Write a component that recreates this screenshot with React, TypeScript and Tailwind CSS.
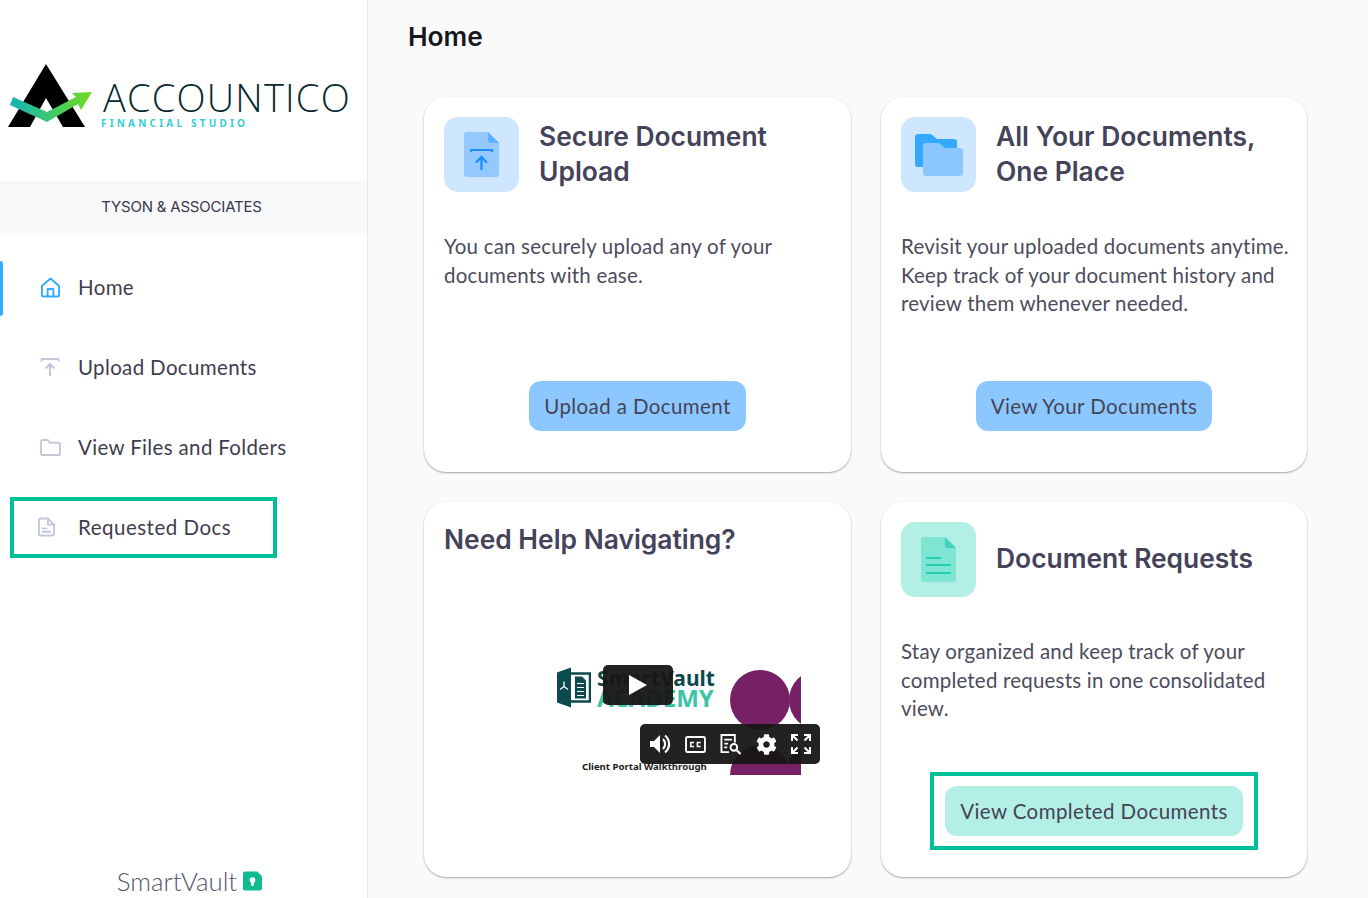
import { FaCog } from "react-icons/fa";
import type { ReactNode } from "react";

const BODY = "font-['Lato','Noto_Sans',sans-serif]";

function NavHome() {
  return (
    <svg viewBox="0 0 22 22" fill="none" stroke="#33aaff" strokeWidth="2" strokeLinejoin="round" className="w-[21px] h-[21px]">
      <path d="M11 1.500 2 9.500V19a1.500 1.500 0 0 0 1.500 1.500h15A1.500 1.500 0 0 0 20 19V9.500z" />
      <path d="M8 20.500V12.500h6v8" />
    </svg>
  );
}

function NavUpload() {
  return (
    <svg viewBox="0 0 20 20" fill="none" stroke="#c3c8d9" strokeWidth="2" strokeLinejoin="round" className="w-[20px] h-[20px]">
      <path d="M1.500 4.500V2h17v2.500" />
      <path d="M10 19V7.500M5.500 11.500 10 7l4.500 4.500" />
    </svg>
  );
}

function NavFolder() {
  return (
    <svg viewBox="0 0 22 18" fill="none" stroke="#c3c8d9" strokeWidth="2" strokeLinejoin="round" className="w-[21px] h-[17px]">
      <path d="M1 3a2 2 0 0 1 2-2h5l2.500 3H19a2 2 0 0 1 2 2v9a2 2 0 0 1-2 2H3a2 2 0 0 1-2-2z" />
    </svg>
  );
}

function NavDoc() {
  return (
    <svg viewBox="0 0 18 20" fill="none" stroke="#c3c8d9" strokeWidth="2" strokeLinejoin="round" strokeLinecap="round" className="w-[17px] h-[20px]">
      <path d="M3 1h7.500L17 7.500V17a2 2 0 0 1-2 2H3a2 2 0 0 1-2-2V3a2 2 0 0 1 2-2z" />
      <path d="M10.500 1v6.500H17M5 11.500h4M5 15h8" />
    </svg>
  );
}

function NavItem({ icon, label, active }: { icon: ReactNode; label: string; active?: boolean }) {
  return (
    <div className="relative h-[80px] flex items-center pl-[40px]">
      {active && <span className="absolute left-0 top-[14px] h-[55px] w-[3px] rounded-r-sm bg-[#33aaff]" />}
      <span className="w-[38px] flex justify-start">{icon}</span>
      <span className={`${BODY} pt-[1px] text-[20.500px] tracking-[0.35px] text-[#3f3d4e]`}>{label}</span>
    </div>
  );
}

function IconTile({ children, tone }: { children: ReactNode; tone: string }) {
  return <div className={`w-[75px] h-[75px] rounded-[14px] flex items-center justify-center shrink-0 ${tone}`}>{children}</div>;
}

function Card({ icon, title, text, action, tone, outlined }: { icon: ReactNode; title: string; text: string[]; action: string; tone: string; outlined?: boolean }) {
  const button = (
    <button className={`${BODY} h-[50px] px-[15px] rounded-[12px] text-[20.500px] tracking-[0.4px] text-[#454457] ${tone}`}>{action}</button>
  );
  return (
    <div className="h-[375px] rounded-[22px] bg-white shadow-[0_1px_2px_rgba(0,0,0,0.35)] flex flex-col p-5">
      <div className="flex items-center gap-5 h-[75px]">
        {icon}
        <h2 className="font-['Inter',sans-serif] font-semibold text-[26.400px] leading-[35px] pb-[2px] text-[#44435a]">{title}</h2>
      </div>
      <div className={`${BODY} mt-[40px] text-[20.500px] tracking-[0.2px] leading-[28.500px] text-[#4d4c5c] whitespace-nowrap`}>
        {text.map((line) => (
          <div key={line}>{line}</div>
        ))}
      </div>
      <div className="mt-auto mb-[21px] flex justify-center">
        {outlined ? <div className="border-4 border-[#00bf9b] px-[11px] py-[10px] -my-[14px]">{button}</div> : button}
      </div>
    </div>
  );
}

function VideoThumb() {
  return (
    <div className="relative w-[265px] h-[110px] ml-[112px] mt-[108px] overflow-hidden">
      {/* purple blobs */}
      <div className="absolute left-[174px] top-[5px] w-[60px] h-[60px] rounded-full bg-[#762166]" />
      <div className="absolute left-[233px] top-[5px] w-[60px] h-[60px] rounded-full bg-[#762166]" />
      <div className="absolute left-[174px] top-[80px] w-[60px] h-[60px] rounded-full bg-[#762166]" />
      <div className="absolute left-[229px] top-[80px] w-[60px] h-[60px] rounded-full bg-[#762166]" />
      <div className="absolute left-[245px] top-0 w-[40px] h-[110px] bg-white" />
      {/* academy logo */}
      <svg viewBox="0 0 35 40" className="absolute left-0 top-[2px] w-[35px] h-[41px]">
        <path d="M1 5 15 0v40L1 35z" fill="#0b4a4e" />
        <path d="M8 14v5l-4 3M8 19l4 3" stroke="#fff" strokeWidth="1.300" fill="none" />
        <path d="M15 6h19v28H15" fill="none" stroke="#0b4a4e" strokeWidth="2.500" />
        <path d="M19 9h7l4 4v18H19z" fill="#0b4a4e" />
        <path d="M21 16h7M21 20h7M21 24h7M21 28h7" stroke="#fff" strokeWidth="1" />
      </svg>
      <div className="absolute left-[41px] top-[3px] font-['Noto_Sans',sans-serif] font-bold text-[21px] leading-[20px] text-[#0b4a4e]">SmartVault</div>
      <div className="absolute left-[41px] top-[24px] font-['Noto_Sans',sans-serif] font-bold text-[24px] leading-[18px] text-[#3bc4a8]">ACADEMY</div>
      <div className="absolute left-[26px] top-[95px] font-['Noto_Sans',sans-serif] font-bold text-[9.600px] leading-[14px] text-[#1b1b1b] whitespace-nowrap">Client Portal Walkthrough</div>
      {/* play button */}
      <div className="absolute left-[47px] top-0 w-[70px] h-[40px] rounded-[5px] bg-[#161616]/95 flex items-center justify-center">
        <svg viewBox="0 0 20 22" className="w-[18px] h-[20px]"><path d="M0 0l20 11L0 22z" fill="#fff" /></svg>
      </div>
      {/* player controls */}
      <div className="absolute left-[84px] top-[59px] w-[180px] h-[40px] rounded-[5px] bg-[#161616]/95 flex items-center justify-between px-[9px]">
        <svg viewBox="0 0 22 22" className="w-[22px] h-[22px]">
          <path d="M1 8h4l6-6v18l-6-6H1z" fill="#fff" />
          <path d="M14 6a7 7 0 0 1 0 10M16 2.500a11 11 0 0 1 0 17" stroke="#fff" strokeWidth="2.200" fill="none" />
        </svg>
        <svg viewBox="0 0 22 18" className="w-[21px] h-[17px]">
          <rect x="1" y="1" width="20" height="16" rx="1.500" fill="none" stroke="#fff" strokeWidth="2" />
          <path d="M9.500 7H6v4h3.500M16.500 7H13v4h3.500" fill="none" stroke="#fff" strokeWidth="1.600" />
        </svg>
        <svg viewBox="0 0 22 22" className="w-[22px] h-[21px]">
          <path d="M9 19H1V1h14v8" fill="none" stroke="#fff" strokeWidth="2" />
          <path d="M4 6h8M4 10h4M4 14h3" stroke="#fff" strokeWidth="1.800" />
          <circle cx="14" cy="14" r="3.500" fill="none" stroke="#fff" strokeWidth="2" />
          <path d="m17 17 4 4" stroke="#fff" strokeWidth="2.200" />
        </svg>
        <FaCog className="w-[21px] h-[21px] text-white" />
        <svg viewBox="0 0 20 20" fill="none" stroke="#fff" strokeWidth="2" className="w-[20px] h-[20px]">
          <path d="M1 7V1h6M13 1h6v6M19 13v6h-6M7 19H1v-6M1.500 1.500l5 5M18.500 1.500l-5 5M18.500 18.500l-5-5M1.500 18.500l5-5" />
        </svg>
      </div>
    </div>
  );
}

export default function App() {
  return (
    <div className="flex h-[898px] w-[1368px] overflow-hidden bg-[#fafafa]">
      <aside className="w-[368px] shrink-0 h-full bg-white border-r border-[#e6e8ee] flex flex-col">
        <div className="h-[181px] pt-[62px] pl-[8px] flex items-start gap-[11px]">
          <svg viewBox="0 0 84 66" className="w-[84px] h-[66px] shrink-0">
            <defs>
              <linearGradient id="swoosh" x1="0" x2="1" y1="0" y2="0">
                <stop offset="0" stopColor="#10b5b8" />
                <stop offset="1" stopColor="#6fdc1e" />
              </linearGradient>
            </defs>
            <path d="M38 2 77 65H55L38 36 22 65H0z" fill="#000" />
            <path d="M5 35 39 50 68 35l-4-4 20-1-11 18-3-6-31 18L2 43z" fill="url(#swoosh)" />
          </svg>
          <div className="pt-[16px]">
            <div className="font-['Open_Sans',sans-serif] font-light text-[38px] leading-[38px] tracking-[1.200px] text-[#07292f]">ACCOUNTICO</div>
            <div className="font-['Noto_Sans',sans-serif] font-bold text-[10px] leading-[12px] tracking-[3.200px] text-[#38cdd6] -ml-[2px] mt-[1px]">FINANCIAL STUDIO</div>
          </div>
        </div>

        <div className="h-[52px] bg-[#f7f8fa] flex items-center justify-center pr-[4px]">
          <span className="font-['Inter',sans-serif] text-[15px] tracking-[-0.2px] text-[#3a3a48]">TYSON &amp; ASSOCIATES</span>
        </div>

        <nav className="mt-[14px]">
          <NavItem active label="Home" icon={<NavHome />} />
          <NavItem label="Upload Documents" icon={<NavUpload />} />
          <NavItem label="View Files and Folders" icon={<NavFolder />} />
          <div className="h-[80px] flex items-center">
            <div className="ml-[10px] w-[267px] h-[61px] border-4 border-[#00bf9b] flex items-center pl-[24px]">
              <span className="w-[40px]"><NavDoc /></span>
              <span className={`${BODY} pt-[1px] text-[20.500px] tracking-[0.5px] text-[#3f3d4e]`}>Requested Docs</span>
            </div>
          </div>
        </nav>

        <div className="mt-auto mb-[2px] flex items-center justify-center gap-[6px] pl-[12px]">
          <span className="font-['Lato',sans-serif] font-light text-[25.800px] leading-[30px] text-[#55566a]">SmartVault</span>
          <svg viewBox="0 0 20 20" className="w-[19px] h-[20px]">
            <path d="M2 0h13l5 5v13a2 2 0 0 1-2 2H2a2 2 0 0 1-2-2V2a2 2 0 0 1 2-2z" fill="#10bb91" />
            <circle cx="10" cy="9" r="3" fill="#fff" />
            <path d="M8.500 10h3v5h-3z" fill="#fff" />
          </svg>
        </div>
      </aside>

      <main className="flex-1 min-w-0">
        <h1 className="pl-[40px] pt-[20px] h-[97px] font-['Inter',sans-serif] font-semibold text-[26.300px] leading-[34px] text-[#17171f]">Home</h1>
        <div className="ml-[56px] w-[883px] grid grid-cols-[427px_426px] gap-[30px]">
          <Card
            title="Secure Document Upload"
            text={["You can securely upload any of your", "documents with ease."]}
            action="Upload a Document"
            tone="bg-[#8cc8ff]"
            icon={
              <IconTile tone="bg-[#cfe6ff]">
                <svg viewBox="0 0 35 45" className="w-[35px] h-[45px]">
                  <path d="M3 0h21l11 11v31a3 3 0 0 1-3 3H3a3 3 0 0 1-3-3V3a3 3 0 0 1 3-3z" fill="#93c9ff" />
                  <path d="M24 0l11 11H27a3 3 0 0 1-3-3z" fill="#5cb0ff" />
                  <path d="M7 20v-2h21v2" stroke="#1a8cff" strokeWidth="2" fill="none" />
                  <path d="M17.500 38V25M12 30.500l5.500-5.500 5.500 5.500" stroke="#1a8cff" strokeWidth="2.200" fill="none" />
                </svg>
              </IconTile>
            }
          />
          <Card
            title="All Your Documents, One Place"
            text={["Revisit your uploaded documents anytime.", "Keep track of your document history and", "review them whenever needed."]}
            action="View Your Documents"
            tone="bg-[#8cc8ff]"
            icon={
              <IconTile tone="bg-[#cfe6ff]">
                <svg viewBox="0 0 48 42" className="w-[48px] h-[42px]">
                  <path d="M3 0h13l6 5h17a3 3 0 0 1 3 3v22a3 3 0 0 1-3 3H3a3 3 0 0 1-3-3V3a3 3 0 0 1 3-3z" fill="#33aaff" />
                  <path d="M11 9h13l6 5h15a3 3 0 0 1 3 3v22a3 3 0 0 1-3 3H11a3 3 0 0 1-3-3V12a3 3 0 0 1 3-3z" fill="#8cc8ff" />
                </svg>
              </IconTile>
            }
          />

          <div className="h-[375px] rounded-[22px] bg-white shadow-[0_1px_2px_rgba(0,0,0,0.35)] p-5">
            <h2 className="font-['Inter',sans-serif] font-semibold text-[26.400px] leading-[35px] text-[#44435a]">Need Help Navigating?</h2>
            <VideoThumb />
          </div>

          <Card
            title="Document Requests"
            text={["Stay organized and keep track of your", "completed requests in one consolidated", "view."]}
            action="View Completed Documents"
            tone="bg-[#b3efe5]"
            outlined
            icon={
              <IconTile tone="bg-[#b3efe5]">
                <svg viewBox="0 0 35 45" className="w-[35px] h-[45px]">
                  <path d="M3 0h21l11 11v31a3 3 0 0 1-3 3H3a3 3 0 0 1-3-3V3a3 3 0 0 1 3-3z" fill="#7fe5d3" />
                  <path d="M24 0l11 11H27a3 3 0 0 1-3-3z" fill="#3fd4bb" />
                  <path d="M5 21h15M5 28h25M5 36h25" stroke="#22d0b0" strokeWidth="2.200" />
                </svg>
              </IconTile>
            }
          />
        </div>
      </main>
    </div>
  );
}
